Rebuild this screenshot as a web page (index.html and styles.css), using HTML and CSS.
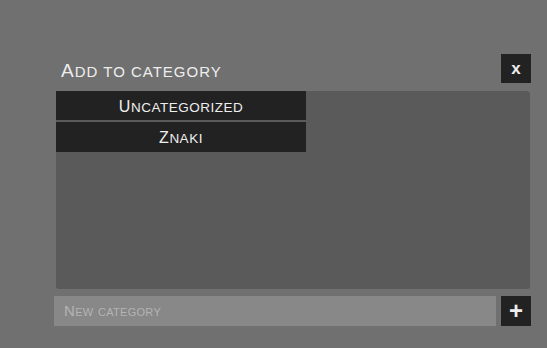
FILE: index.html
```html
<!DOCTYPE html>
<html lang="en">
<head>
  <meta charset="UTF-8" />
  <title>Add to category</title>
  <link rel="stylesheet" href="styles.css">
</head>
<body>
  <div class="dialog">
    <div class="dialog-head">
      <h2 class="dialog-title">Add to category</h2>
      <button class="close-btn">x</button>
    </div>
    <div class="cat-list">
      <div class="cat-item">Uncategorized</div>
      <div class="cat-item">Znaki</div>
    </div>
    <div class="new-row">
      <input class="new-input" type="text" placeholder="New category">
      <button class="add-btn">+</button>
    </div>
  </div>
</body>
</html>
```

FILE: styles.css
```css
body {
  margin: 0;
  background-color: #707070;
  font-family: "Liberation Sans", Arial, sans-serif;
}
.dialog {
  width: 477px;
  margin: 54px 0 0 54px;
}
.dialog-head {
  display: flex;
  justify-content: space-between;
  align-items: flex-end;
  height: 29px;
}
.dialog-title {
  margin: 0 0 3px 7px;
  font-size: 15px;
  font-weight: normal;
  text-transform: uppercase;
  letter-spacing: 1px;
  color: #eeeeee;
  line-height: 16px;
}
.dialog-title::first-letter {
  font-size: 19px;
}
.close-btn, .add-btn {
  width: 30px;
  background-color: #222222;
  color: #eeeeee;
  border: none;
  padding: 0;
  font-family: "Liberation Sans", Arial, sans-serif;
  cursor: pointer;
}
.close-btn {
  height: 29px;
  font-size: 17px;
  font-weight: bold;
}
.cat-list {
  margin: 8px 1px 0 2px;
  height: 198px;
  background-color: #5a5a5a;
  border-radius: 3px;
}
.cat-item {
  width: 250px;
  height: 29px;
  line-height: 31px;
  margin-bottom: 2px;
  background-color: #222222;
  color: #eeeeee;
  text-align: center;
  font-size: 13.5px;
  text-transform: uppercase;
  letter-spacing: 0.5px;
}
.cat-item::first-letter {
  font-size: 16px;
}
.cat-item + .cat-item {
  height: 30px;
  line-height: 32px;
}
.new-row {
  display: flex;
  gap: 5px;
  margin-top: 7px;
}
.new-input {
  flex: 1;
  height: 30px;
  box-sizing: border-box;
  border: none;
  padding: 0 10px 2px;
  background-color: #888888;
  color: #eeeeee;
  font-family: "Liberation Sans", Arial, sans-serif;
  font-size: 15px;
  font-variant: small-caps;
  letter-spacing: 0.3px;
  outline: none;
}
.new-input::placeholder {
  color: #b4b4b4;
}
.add-btn {
  height: 30px;
  font-size: 24px;
  font-weight: bold;
  line-height: 30px;
}
```
